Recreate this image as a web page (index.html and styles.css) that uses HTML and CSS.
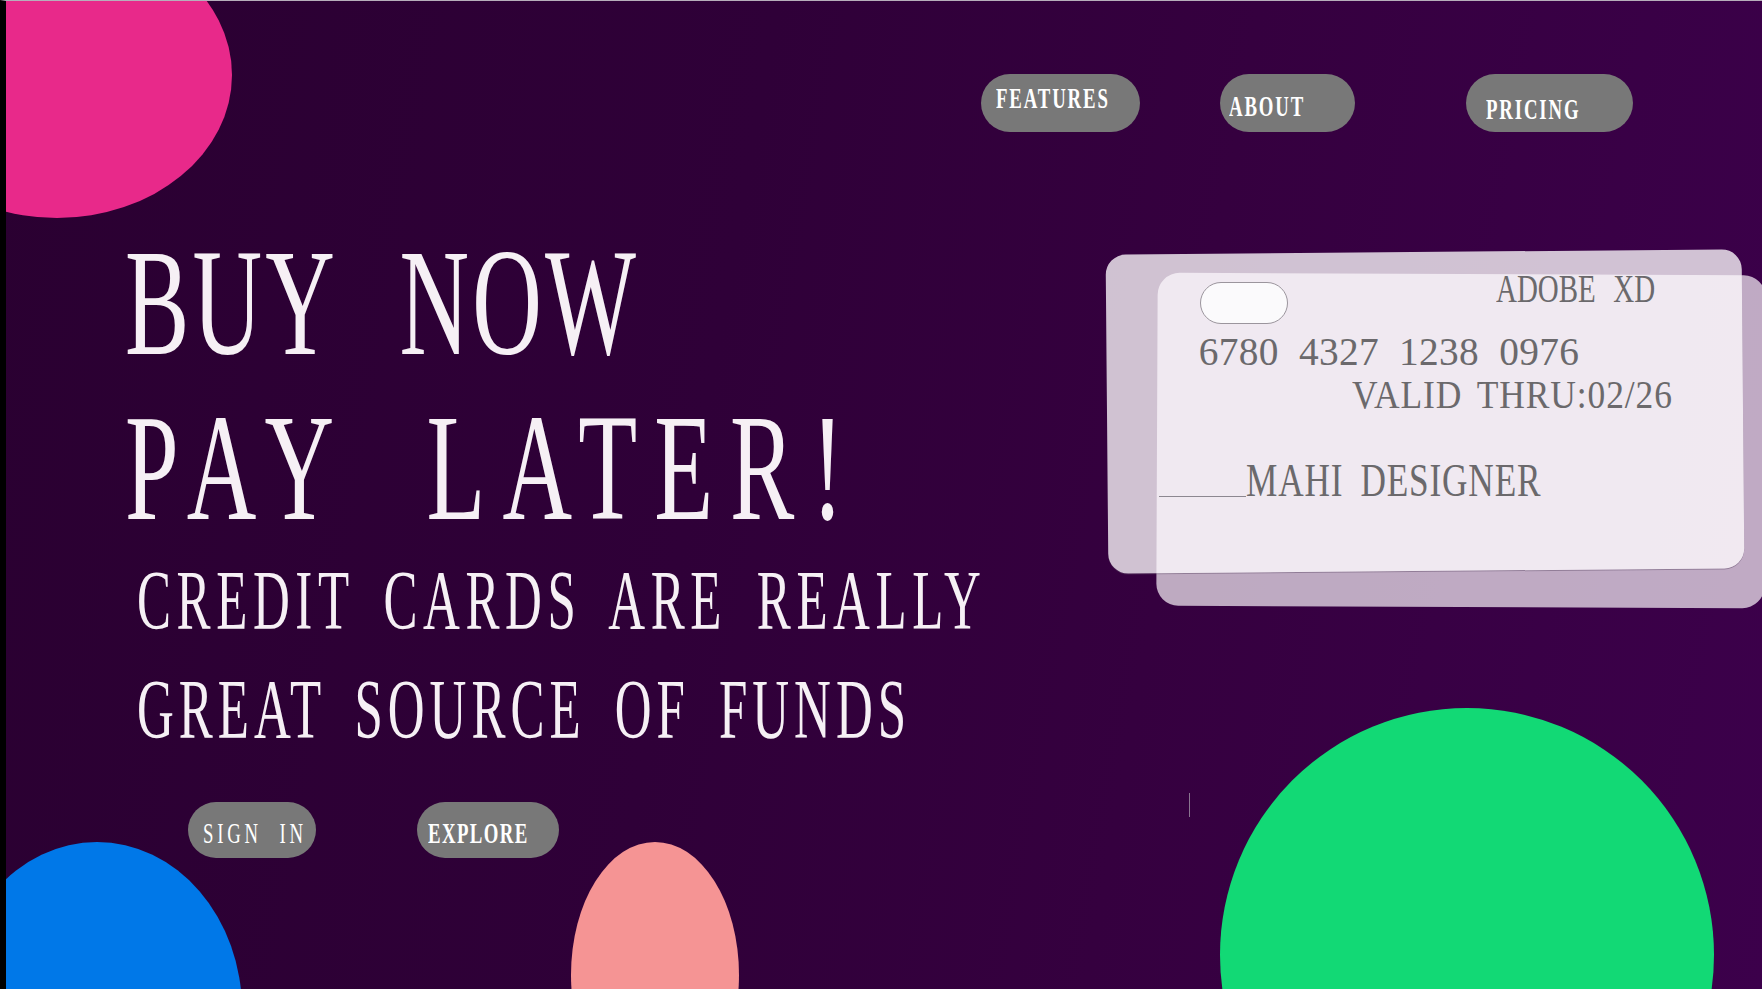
FILE: index.html
```html
<!DOCTYPE html>
<html lang="en">
<head>
<meta charset="utf-8">
<title>Buy Now Pay Later</title>
<link rel="stylesheet" href="styles.css">
</head>
<body>
<div class="page">
  <div class="blob blob-pink"></div>
  <div class="blob blob-blue"></div>
  <div class="blob blob-salmon"></div>
  <div class="blob blob-green"></div>
  <div class="caret"></div>

  <header class="nav">
    <a class="pill pill-features"><span class="pill-label bold">FEATURES</span></a>
    <a class="pill pill-about"><span class="pill-label bold">ABOUT</span></a>
    <a class="pill pill-pricing"><span class="pill-label bold">PRICING</span></a>
  </header>

  <main class="hero">
    <section class="copy">
      <h1 class="headline">
        <span class="headline-line line-buy">BUY NOW</span>
        <span class="headline-line line-pay">PAY LATER!</span>
      </h1>
      <p class="subline">
        <span class="subline-line line-credit">CREDIT CARDS ARE REALLY</span>
        <span class="subline-line line-great">GREAT SOURCE OF FUNDS</span>
      </p>
      <div class="actions">
        <a class="pill btn-signin"><span class="pill-label label-signin">SIGN IN</span></a>
        <a class="pill btn-explore"><span class="pill-label bold label-explore">EXPLORE</span></a>
      </div>
    </section>

    <aside class="card-stack">
      <div class="card-layer card-back"></div>
      <div class="card-layer card-front"></div>
      <div class="card-content">
        <div class="card-row-top">
          <div class="chip"></div>
          <span class="card-text brand">ADOBE XD</span>
        </div>
        <div class="card-text number">6780 4327 1238 0976</div>
        <div class="card-text valid">VALID THRU:02/26</div>
        <div class="card-row-name">
          <div class="name-rule"></div>
          <span class="card-text holder">MAHI DESIGNER</span>
        </div>
      </div>
    </aside>
  </main>
</div>
</body>
</html>
```
FILE: styles.css
```css
html {
  background: #000;
}

body {
  margin: 0;
  width: 1756px;
  height: 988px;
  border-left: 6px solid #000;
  border-top: 1px solid #b7aebb;
  overflow: hidden;
  font-family: "Liberation Serif", "DejaVu Serif", serif;
}

.page {
  position: relative;
  width: 1756px;
  height: 988px;
  overflow: hidden;
  background: linear-gradient(100deg, #2a0031 0%, #2f0038 40%, #35003f 65%, #3c004b 100%);
}

/* decorative blobs */
.blob {
  position: absolute;
  border-radius: 50%;
}

.blob-pink {
  left: -124px;
  top: -69px;
  width: 350px;
  height: 286px;
  background: #e8298a;
}

.blob-blue {
  left: -54px;
  top: 841px;
  width: 290px;
  height: 336px;
  background: #0078e8;
}

.blob-salmon {
  left: 565px;
  top: 841px;
  width: 168px;
  height: 266px;
  background: #f59494;
}

.blob-green {
  left: 1214px;
  top: 707px;
  width: 494px;
  height: 494px;
  background: #12d975;
}

.caret {
  position: absolute;
  left: 1183px;
  top: 792px;
  width: 1px;
  height: 24px;
  background: #8a7590;
}

/* nav */
.nav {
  position: relative;
  display: flex;
  padding: 73px 0 0 975px;
}

.pill {
  display: block;
  box-sizing: border-box;
  background: #787878;
  color: #fff;
  text-decoration: none;
}

.pill-label {
  display: block;
  font-size: 30.3px;
  line-height: 1;
  font-weight: normal;
  letter-spacing: 3px;
  color: #fff;
  white-space: nowrap;
  transform: scaleX(0.62);
  transform-origin: 0 0;
}

.bold {
  font-weight: bold;
}

.pill-features {
  width: 159px;
  height: 58px;
  border-radius: 29px;
  padding: 8.5px 0 0 15px;
}

.pill-about {
  width: 135px;
  height: 58px;
  border-radius: 29px;
  margin-left: 80px;
  padding: 16.5px 0 0 9px;
}

.pill-pricing {
  width: 167px;
  height: 58px;
  border-radius: 29px;
  margin-left: 111px;
  padding: 19.5px 0 0 20px;
}

/* hero */
.hero {
  position: relative;
  display: flex;
  align-items: flex-start;
}

.copy {
  width: 1101px;
  box-sizing: border-box;
  padding-left: 118.5px;
  margin-top: 87.5px;
  color: #f6f0f5;
}

.headline {
  margin: 0;
  font-size: 153px;
  line-height: 165px;
  font-weight: normal;
}

.headline-line {
  display: block;
  white-space: nowrap;
  transform: scaleX(0.63);
  transform-origin: 0 0;
  word-spacing: 60px;
}

.line-buy {
  letter-spacing: 5px;
}

.line-pay {
  letter-spacing: 27px;
}

.subline {
  margin: -3.8px 0 0 0;
  padding-left: 12px;
  font-size: 85px;
  line-height: 109px;
}

.subline-line {
  display: block;
  white-space: nowrap;
  word-spacing: 19px;
  transform: scaleX(0.6);
  transform-origin: 0 0;
}

.line-credit {
  letter-spacing: 9.3px;
}

.line-great {
  letter-spacing: 8.3px;
}

.actions {
  display: flex;
  margin-top: 38.3px;
  padding-left: 63.5px;
}

.btn-signin {
  width: 128px;
  height: 56px;
  border-radius: 28px;
  padding: 15.5px 0 0 15px;
}

.label-signin {
  letter-spacing: 6px;
  word-spacing: 15px;
}

.btn-explore {
  width: 142px;
  height: 56px;
  border-radius: 28px;
  margin-left: 101px;
  padding: 15.5px 0 0 10.5px;
}

.label-explore {
  letter-spacing: 2.3px;
}

/* credit card */
.card-stack {
  position: relative;
  width: 636px;
  height: 319px;
  margin-top: 120px;
}

.card-layer {
  position: absolute;
}

.card-back {
  left: 50px;
  top: 22px;
  width: 608px;
  height: 333px;
  border-radius: 22px;
  background: rgba(255, 250, 255, 0.68);
  transform: rotate(0.25deg);
}

.card-front {
  left: 0;
  top: 0;
  width: 636px;
  height: 319px;
  border-radius: 20px;
  background: rgba(255, 252, 255, 0.77);
  box-shadow: 0 1px 0 rgba(90, 70, 100, 0.45);
  transform: rotate(-0.5deg);
}

.card-content {
  position: relative;
  height: 319px;
  color: #6b696c;
}

.card-text {
  display: block;
  font-size: 39.4px;
  line-height: 39.4px;
  white-space: nowrap;
  transform-origin: 0 0;
}

.card-row-top {
  display: flex;
  align-items: flex-start;
  padding: 18px 0 0 93px;
}

.chip {
  width: 88px;
  height: 42px;
  box-sizing: border-box;
  margin-top: 12px;
  border-radius: 21px;
  border: 1px solid #9b959d;
  background: #fbfafc;
  flex: none;
}

.brand {
  margin-left: 207.5px;
  word-spacing: 14px;
  transform: scaleX(0.735);
}

.number {
  margin: 8.9px 0 0 91.8px;
  letter-spacing: 0.3px;
  word-spacing: 10px;
}

.valid {
  margin: 3.6px 0 0 244.5px;
  letter-spacing: 1px;
  word-spacing: 6px;
  transform: scaleX(0.9);
}

.card-row-name {
  display: flex;
  align-items: flex-start;
  margin-top: 42.2px;
  padding-left: 52px;
}

.name-rule {
  width: 87px;
  height: 1px;
  margin-top: 38.5px;
  background: #8c8790;
  flex: none;
}

.holder {
  font-size: 47px;
  line-height: 47px;
  letter-spacing: 1.1px;
  word-spacing: 10px;
  transform: scaleX(0.75);
}
```
